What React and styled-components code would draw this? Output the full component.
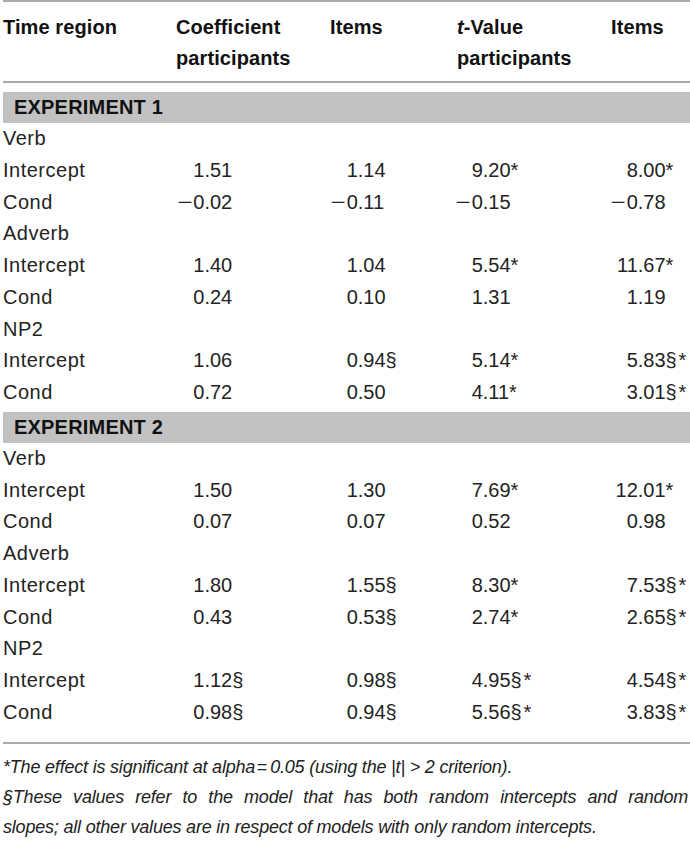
import React from "react";
import styled, { createGlobalStyle } from "styled-components";

const GlobalStyle = createGlobalStyle`
  html, body {
    margin: 0;
    padding: 0;
    background: #fff;
  }
  body {
    font-family: "Liberation Sans", Arial, sans-serif;
    color: #232323;
  }
`;

const COLS = "173px 154px 127px 154px 79px";
// distance from a column's left edge to its decimal point
const DECIMAL = [0, 28.4, 27.8, 25.8, 26.8];

const sections = [
  {
    title: "EXPERIMENT 1",
    groups: [
      {
        name: "Verb",
        rows: [
          ["Intercept", "1.51", "1.14", "9.20*", "8.00*"],
          ["Cond", "−0.02", "−0.11", "−0.15", "−0.78"],
        ],
      },
      {
        name: "Adverb",
        rows: [
          ["Intercept", "1.40", "1.04", "5.54*", "11.67*"],
          ["Cond", "0.24", "0.10", "1.31", "1.19"],
        ],
      },
      {
        name: "NP2",
        rows: [
          ["Intercept", "1.06", "0.94§", "5.14*", "5.83§\u200a*"],
          ["Cond", "0.72", "0.50", "4.11*", "3.01§\u200a*"],
        ],
      },
    ],
  },
  {
    title: "EXPERIMENT 2",
    groups: [
      {
        name: "Verb",
        rows: [
          ["Intercept", "1.50", "1.30", "7.69*", "12.01*"],
          ["Cond", "0.07", "0.07", "0.52", "0.98"],
        ],
      },
      {
        name: "Adverb",
        rows: [
          ["Intercept", "1.80", "1.55§", "8.30*", "7.53§\u200a*"],
          ["Cond", "0.43", "0.53§", "2.74*", "2.65§\u200a*"],
        ],
      },
      {
        name: "NP2",
        rows: [
          ["Intercept", "1.12§", "0.98§", "4.95§\u200a*", "4.54§\u200a*"],
          ["Cond", "0.98§", "0.94§", "5.56§\u200a*", "3.83§\u200a*"],
        ],
      },
    ],
  },
];

const Page = styled.div`
  padding-left: 3px;
  width: 687px;
  overflow: hidden;
`;

const Table = styled.div`
  border-top: 2px solid #a9a9a9;
  border-bottom: 2px solid #a9a9a9;
  padding-bottom: 13px;
`;

const HeadRow = styled.div`
  display: grid;
  grid-template-columns: ${COLS};
  padding: 9.5px 0 7.5px;
  border-bottom: 2px solid #a9a9a9;
`;

const HeadCell = styled.div`
  font-size: 20px;
  font-weight: bold;
  line-height: 31px;
  color: #111;
  letter-spacing: 0.1px;
`;

const Band = styled.div`
  margin-top: ${(p) => p.$gap}px;
  background: #c2c2c2;
  height: 31px;
  line-height: 31px;
  padding-left: 11px;
  font-size: 20px;
  font-weight: bold;
  color: #111;
  letter-spacing: 0.2px;
`;

const Row = styled.div`
  display: grid;
  grid-template-columns: ${COLS};
  height: 31.75px;
  line-height: 31.75px;
  font-size: 20px;
  white-space: nowrap;
`;

const Label = styled.div`
  letter-spacing: 0.5px;
`;

const Cell = styled.div``;

const Int = styled.span`
  display: inline-block;
  width: ${(p) => p.$w}px;
  text-align: right;
`;

const Minus = styled.span`
  display: inline-block;
  transform: scaleX(1.3);
  transform-origin: right center;
  margin-right: 1px;
`;

const Notes = styled.div`
  margin-top: 8px;
  font-size: 18px;
  font-style: italic;
  line-height: 30px;
  color: #222;
  letter-spacing: -0.2px;
`;

const NoteLine = styled.div`
  text-align: ${(p) => (p.$justify ? "justify" : "left")};
  text-align-last: ${(p) => (p.$justify ? "justify" : "auto")};
  width: ${(p) => (p.$justify ? "685px" : "auto")};
  white-space: ${(p) => (p.$justify ? "normal" : "nowrap")};
`;

const Num = ({ value, col }) => {
  const [int, frac] = value.split(".");
  const neg = int.startsWith("−");
  return (
    <Cell>
      <Int $w={DECIMAL[col]}>
        {neg && <Minus>−</Minus>}
        {neg ? int.slice(1) : int}
      </Int>
      <span>.{frac}</span>
    </Cell>
  );
};

export default function App() {
  return (
    <>
      <GlobalStyle />
      <Page>
        <Table>
          <HeadRow>
            <HeadCell>Time region</HeadCell>
            <HeadCell>
              Coefficient
              <br />
              participants
            </HeadCell>
            <HeadCell>Items</HeadCell>
            <HeadCell>
              <i>t</i>-Value
              <br />
              participants
            </HeadCell>
            <HeadCell>Items</HeadCell>
          </HeadRow>
          {sections.map((s, si) => (
            <React.Fragment key={s.title}>
              <Band $gap={si === 0 ? 9 : 3}>{s.title}</Band>
              {s.groups.map((g) => (
                <React.Fragment key={g.name}>
                  <Row>
                    <Label>{g.name}</Label>
                  </Row>
                  {g.rows.map((r) => (
                    <Row key={r[0]}>
                      <Label>{r[0]}</Label>
                      {r.slice(1).map((v, i) => (
                        <Num key={i} value={v} col={i + 1} />
                      ))}
                    </Row>
                  ))}
                </React.Fragment>
              ))}
            </React.Fragment>
          ))}
        </Table>
        <Notes>
          <NoteLine>
            *The effect is significant at alpha{"\u200a"}={"\u2009"}0.05 (using the |<i>t</i>|
            &gt; 2 criterion).
          </NoteLine>
          <NoteLine $justify>
            §These values refer to the model that has both random intercepts and random
          </NoteLine>
          <NoteLine>
            slopes; all other values are in respect of models with only random intercepts.
          </NoteLine>
        </Notes>
      </Page>
    </>
  );
}
